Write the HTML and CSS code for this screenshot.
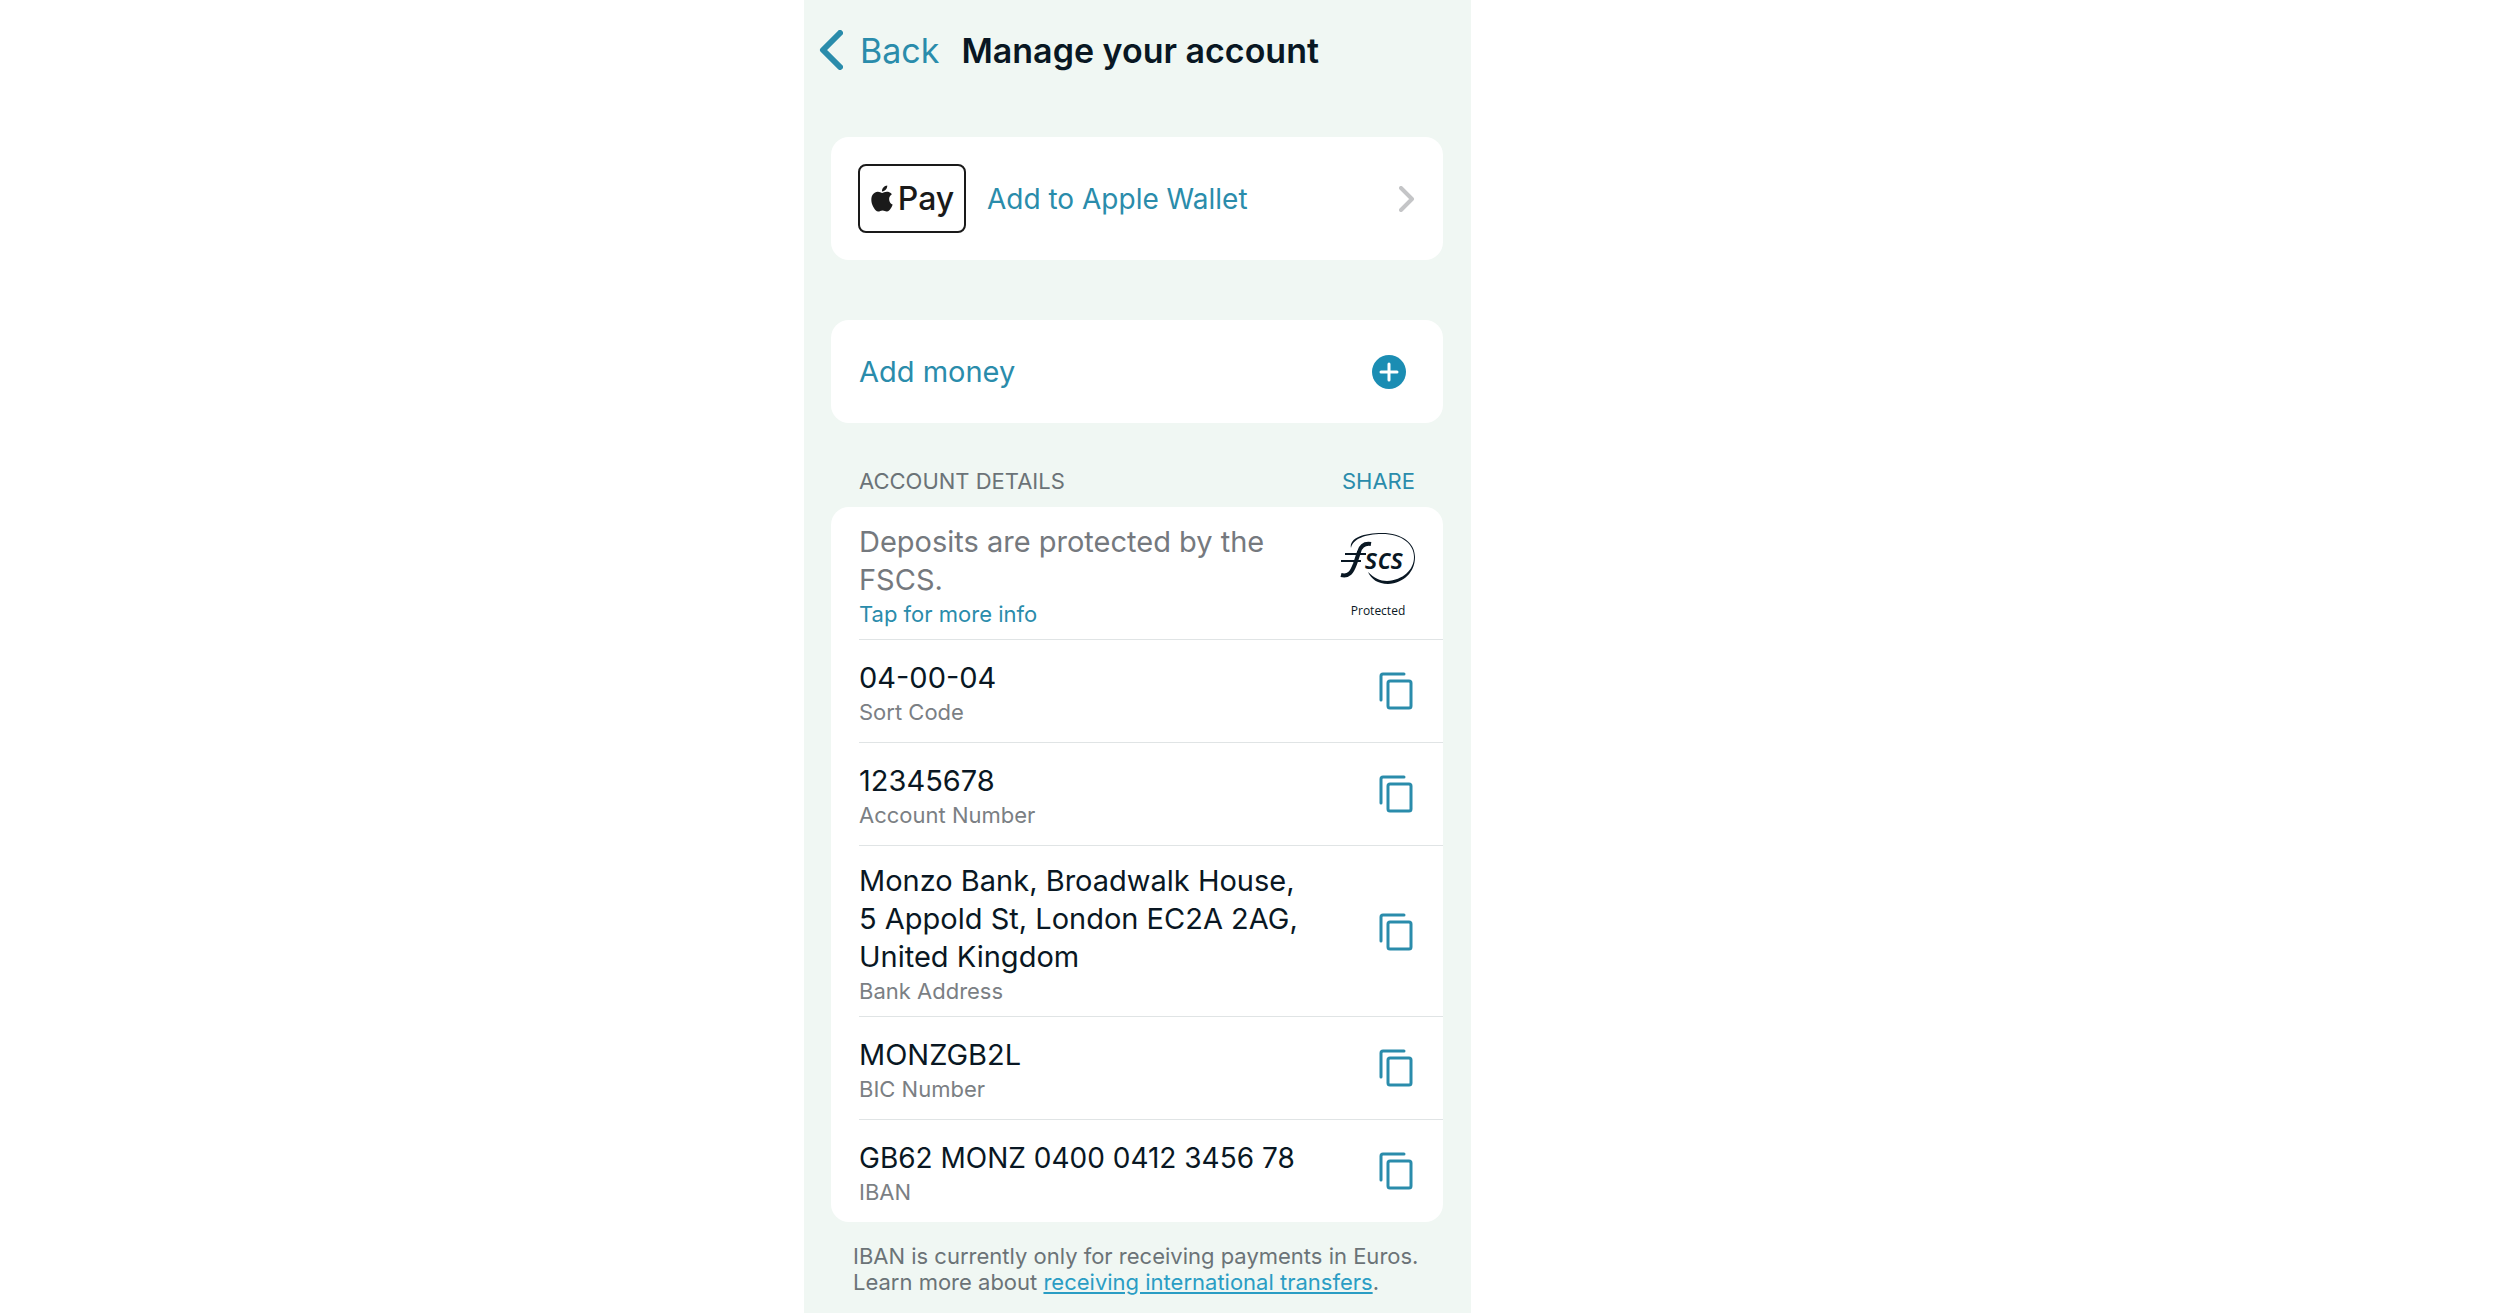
FILE: index.html
```html
<!DOCTYPE html>
<html lang="en">
<head>
    <meta charset="UTF-8">
    <meta name="viewport" content="width=device-width, initial-scale=1.0">
    <title>Manage your account</title>
    <link rel="stylesheet" href="styles.css">
</head>
<body>
    <!-- Shared copy icon -->
    <svg class="sprite" aria-hidden="true">
        <symbol id="copy" viewBox="0 0 34 38">
            <path d="M2 28V4a2 2 0 0 1 2-2h21" />
            <rect x="9" y="9" width="23" height="27" rx="2" />
        </symbol>
    </svg>

    <main class="screen">
        <header class="topbar">
            <a href="#" class="back">
                <svg class="backIcon" viewBox="0 0 24 40"><path d="M21 3L4 20l17 17" /></svg>
                Back
            </a>
            <h1>Manage your account</h1>
        </header>

        <a href="#" class="card wallet">
            <span class="applePay">
                <svg class="apple" viewBox="1 0 22 24"><path d="M12.152 6.896c-.948 0-2.415-1.078-3.96-1.04-2.04.027-3.91 1.183-4.961 3.014-2.117 3.675-.546 9.103 1.519 12.09 1.013 1.454 2.208 3.09 3.792 3.039 1.52-.065 2.09-.987 3.935-.987 1.831 0 2.35.987 3.96.948 1.637-.026 2.676-1.48 3.676-2.948 1.156-1.688 1.636-3.325 1.662-3.415-.039-.013-3.182-1.221-3.22-4.857-.026-3.04 2.48-4.494 2.597-4.559-1.429-2.09-3.623-2.324-4.39-2.376-2-.156-3.675 1.09-4.61 1.09zM15.53 3.83c.843-1.012 1.4-2.427 1.245-3.83-1.207.052-2.662.805-3.532 1.818-.78.896-1.454 2.338-1.273 3.714 1.338.104 2.715-.688 3.559-1.701" /></svg>
                Pay
            </span>
            <span>Add to Apple Wallet</span>
            <svg class="chevron" viewBox="0 0 16 26"><path d="M2 2l11 11L2 24" /></svg>
        </a>

        <button class="card addMoney">
            Add money
            <svg class="plus" viewBox="0 0 34 34">
                <circle cx="17" cy="17" r="17" />
                <path d="M17 9v16M9 17h16" />
            </svg>
        </button>

        <div class="sectionHead">
            <h2>ACCOUNT DETAILS</h2>
            <button class="share">SHARE</button>
        </div>

        <ul class="card details">
            <li class="tall">
                <div class="info">
                    <p class="value muted">Deposits are protected by the FSCS.</p>
                    <a href="#" class="label">Tap for more info</a>
                </div>
                <div class="fscs">
                    <svg class="fscsLogo" viewBox="0 0 76 54">
                        <path class="ring" d="M11 16C9 6 24 1 42 1c20 0 33 10 33 24 0 15-11 26-27 27-10 0-17-5-20-12 6 6 12 9 19 9 16-1 27-11 27-24C74 12 62 2 42 2 25 2 13 7 11 16z" />
                        <path class="swoosh" d="M1 43c8 2 11-3 14-11l4-12c2-7 6-9 12-8" />
                        <path class="bars" d="M5 22h21M1 29h20" />
                        <text class="scs" x="25" y="37">scs</text>
                    </svg>
                    <span>Protected</span>
                </div>
            </li>
            <li>
                <div class="info">
                    <p class="value">04-00-04</p>
                    <p class="label">Sort Code</p>
                </div>
                <button class="copy" aria-label="Copy sort code"><svg><use href="#copy" /></svg></button>
            </li>
            <li>
                <div class="info">
                    <p class="value">12345678</p>
                    <p class="label">Account Number</p>
                </div>
                <button class="copy" aria-label="Copy account number"><svg><use href="#copy" /></svg></button>
            </li>
            <li class="tall">
                <div class="info">
                    <p class="value">Monzo Bank, Broadwalk House,<br>5 Appold St, London EC2A 2AG,<br>United Kingdom</p>
                    <p class="label">Bank Address</p>
                </div>
                <button class="copy" aria-label="Copy bank address"><svg><use href="#copy" /></svg></button>
            </li>
            <li>
                <div class="info">
                    <p class="value">MONZGB2L</p>
                    <p class="label">BIC Number</p>
                </div>
                <button class="copy" aria-label="Copy BIC number"><svg><use href="#copy" /></svg></button>
            </li>
            <li>
                <div class="info">
                    <p class="value iban">GB62 MONZ 0400 0412 3456 78</p>
                    <p class="label">IBAN</p>
                </div>
                <button class="copy" aria-label="Copy IBAN"><svg><use href="#copy" /></svg></button>
            </li>
        </ul>

        <p class="note">IBAN is currently only for receiving payments in Euros.<br>Learn more about <a href="#">receiving international transfers</a>.</p>
    </main>
</body>
</html>
```
FILE: styles.css
```css
*{
    margin: 0;
    padding: 0;
    box-sizing: border-box;
}

body{
    background: #ffffff;
    color: #091723;
    font-family: Inter, "Liberation Sans", sans-serif;
    font-size: 28px;
}

a{
    color: #2a8cab;
    text-decoration: none;
}

button{
    border: none;
    background: transparent;
    color: #2a8cab;
    font: inherit;
    cursor: pointer;
}

svg{
    display: block;
    flex: none;
    fill: none;
    stroke-linecap: round;
    stroke-linejoin: round;
}

.sprite{
    position: absolute;
    width: 0;
    height: 0;
}

.screen{
    max-width: 667px;
    min-height: 100vh;
    margin-left: 32.16%;
    padding: 28px 28px 16px 27px;
    background: #f0f7f3;
}

.topbar{
    display: flex;
    align-items: center;
    gap: 22px;
    height: 44px;
    margin: 0 0 65px -12px;
    white-space: nowrap;
}

.back{
    display: flex;
    align-items: center;
    gap: 17px;
    font-size: 34px;
}

.backIcon{
    width: 24px;
    height: 40px;
    stroke: #2a8cab;
    stroke-width: 6;
}

h1{
    font-size: 34px;
    font-weight: 600;
}

.card{
    width: 100%;
    border-radius: 18px;
    background: #ffffff;
}

.wallet{
    display: flex;
    align-items: center;
    gap: 21px;
    padding: 27px 28px 27px 27px;
}

.applePay{
    display: flex;
    align-items: center;
    justify-content: center;
    gap: 4px;
    width: 108px;
    height: 69px;
    border: 2px solid #1a1a1a;
    border-radius: 8px;
    color: #1a1a1a;
    font-size: 32px;
    font-weight: 500;
}

.apple{
    width: 24px;
    height: 27px;
    fill: #1a1a1a;
}

.chevron{
    width: 16px;
    height: 26px;
    margin-left: auto;
    stroke: #c4c5c7;
    stroke-width: 4;
}

.addMoney{
    display: flex;
    align-items: center;
    justify-content: space-between;
    height: 103px;
    margin-top: 60px;
    padding: 0 37px 0 28px;
    font-size: 29px;
}

.plus{
    width: 34px;
    height: 34px;
    stroke: #ffffff;
    stroke-width: 3;
}

.plus circle{
    fill: #1b8db3;
    stroke: none;
}

.sectionHead{
    display: flex;
    align-items: center;
    justify-content: space-between;
    height: 36px;
    margin-top: 40px;
    padding: 0 28px;
}

h2{
    color: #6b7377;
    font-size: 22px;
    font-weight: 400;
}

.share{
    font-size: 22px;
}

.details{
    margin-top: 8px;
    padding-left: 28px;
    list-style: none;
}

.details li{
    display: flex;
    align-items: center;
    justify-content: space-between;
    padding: 19px 30px 15px 0;
    border-bottom: 1px solid #e0e4e5;
}

.details .tall{
    padding-top: 16px;
    padding-bottom: 10px;
}

.details li:last-child{
    border-bottom: none;
}

.info{
    max-width: 450px;
}

.value{
    font-size: 29px;
    line-height: 38px;
}

.iban{
    font-size: 28px;
}

.muted{
    color: #75797e;
}

.label{
    display: block;
    font-size: 22px;
    line-height: 30px;
}

p.label{
    color: #7b7f84;
}

.copy{
    padding-bottom: 4px;
}

.copy svg{
    width: 34px;
    height: 38px;
    stroke: #2a8cab;
    stroke-width: 3;
}

.fscs{
    display: flex;
    flex-direction: column;
    align-items: center;
    gap: 15px;
    margin-right: -3px;
    font-family: "Open Sans", sans-serif;
    font-size: 12px;
    line-height: 20px;
}

.fscsLogo{
    width: 76px;
    height: 54px;
    fill: #091723;
}

.swoosh{
    fill: none;
    stroke: #091723;
    stroke-width: 4;
    stroke-linecap: butt;
}

.bars{
    stroke: #091723;
    stroke-width: 2;
    stroke-linecap: butt;
}

.scs{
    font: italic 600 28px "Open Sans", sans-serif;
}

.note{
    margin: 21px 0 0 22px;
    color: #6b7377;
    font-size: 22px;
    line-height: 26px;
    white-space: nowrap;
}

.note a{
    color: #2a9dc4;
    text-decoration: underline;
}

@media (max-width: 1000px){
    .screen{
        margin: 0 auto;
    }
}
```
